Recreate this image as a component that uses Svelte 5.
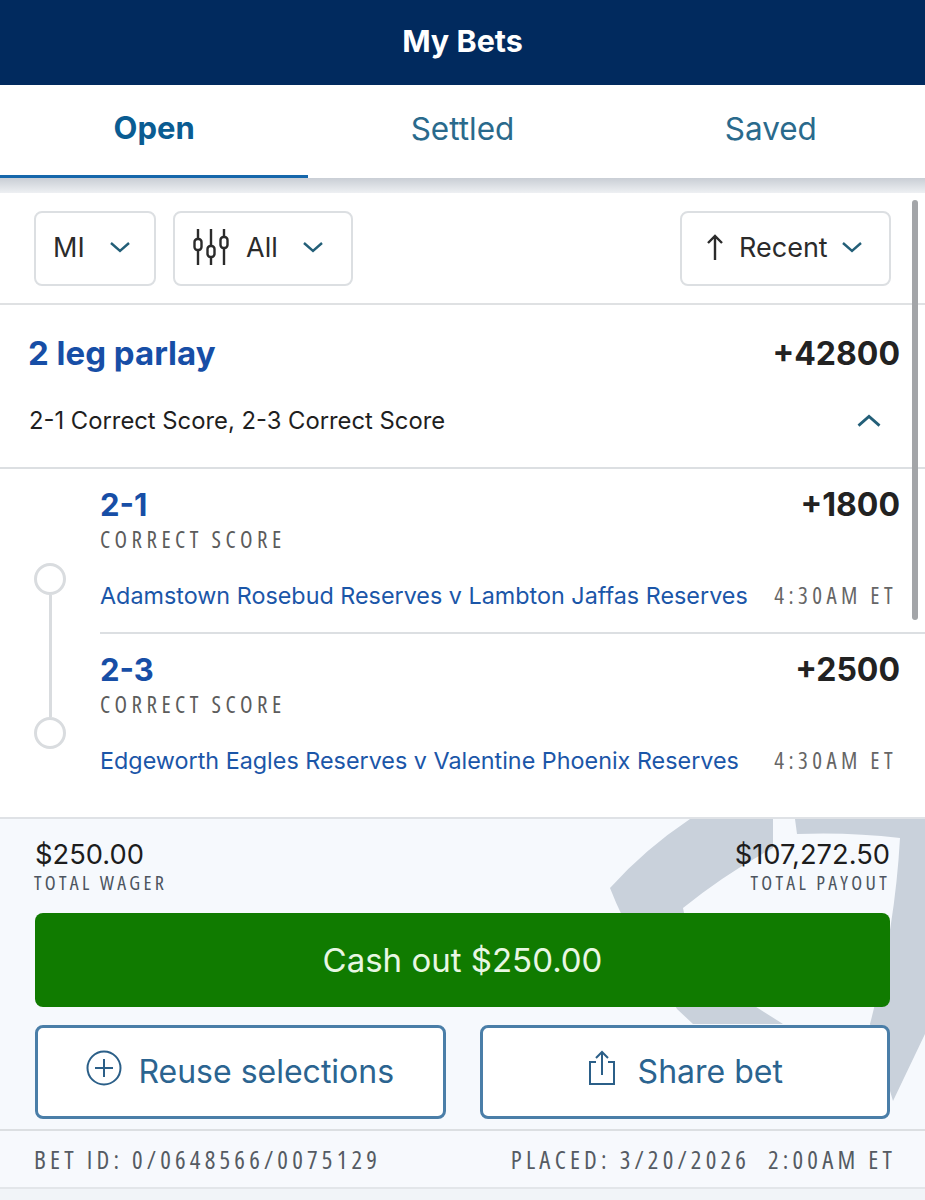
<script lang="ts">
	const tabs = ['Open', 'Settled', 'Saved'];
	const legs = [
		{ score: '2-1', odds: '+1800', game: 'Adamstown Rosebud Reserves v Lambton Jaffas Reserves' },
		{ score: '2-3', odds: '+2500', game: 'Edgeworth Eagles Reserves v Valentine Phoenix Reserves' }
	];
</script>

<style>
	:global(body) {
		margin: 0;
		background: #f1f4f8;
	}

	.page {
		position: relative;
		width: 925px;
		height: 1200px;
		overflow: hidden;
		font-family: Inter, 'Open Sans', sans-serif;
		color: #1f1f1f;
		background: #f1f4f8;
	}

	.topbar {
		height: 85px;
		background: #012a5e;
		color: #fff;
		font-size: 30.5px;
		font-weight: 700;
		display: flex;
		align-items: center;
		justify-content: center;
		padding-bottom: 5px;
		box-sizing: border-box;
	}

	.tabs {
		display: flex;
		height: 93px;
		background: #fff;
	}

	.tab {
		width: 308.5px;
		height: 93px;
		box-sizing: border-box;
		display: flex;
		align-items: center;
		justify-content: center;
		font-size: 31.5px;
		color: #2a6a8c;
		padding-bottom: 6px;
	}

	.tab.active {
		color: #0a5c92;
		font-size: 31px;
		font-weight: 700;
		border-bottom: 3px solid #1667ab;
	}

	.shade {
		height: 15px;
		background: linear-gradient(#c9ced5, #eef0f3);
	}

	.filters {
		height: 112px;
		box-sizing: border-box;
		background: #fff;
		border-bottom: 2px solid #dfe1e3;
		padding: 18px 34px 0;
		display: flex;
		gap: 17px;
	}

	.select {
		height: 75px;
		box-sizing: border-box;
		border: 2px solid #dcdfe2;
		border-radius: 8px;
		display: flex;
		align-items: center;
		font-size: 27px;
		color: #2b2b2b;
		padding-bottom: 3px;
	}

	.state {
		width: 122px;
		padding-left: 17px;
		gap: 24px;
	}

	.type {
		width: 180px;
		padding-left: 17px;
		gap: 16px;
	}

	.type .chev {
		margin-left: 8px;
	}

	.sort {
		width: 211px;
		margin-left: auto;
		padding-left: 24px;
		gap: 15px;
	}

	.sort .chev {
		margin-left: -2px;
	}

	.chev {
		width: 22px;
		height: 12px;
		fill: none;
		stroke: #235f78;
		stroke-width: 2.4;
	}

	.parlay {
		height: 164px;
		box-sizing: border-box;
		background: #fff;
		border-bottom: 2px solid #dcdfe2;
		padding: 28px 25px 0 28px;
	}

	.row {
		display: flex;
		justify-content: space-between;
		align-items: baseline;
	}

	.parlay-title {
		font-size: 33px;
		font-weight: 700;
		color: #174ea6;
	}

	.odds {
		font-size: 32px;
		font-weight: 700;
		color: #222;
	}

	.parlay-sub {
		margin-top: 33px;
		padding: 0 18px 0 1px;
		font-size: 23.8px;
		display: flex;
		justify-content: space-between;
		align-items: center;
	}

	.parlay-sub .chev {
		width: 26px;
		height: 14px;
	}

	.legs {
		height: 350px;
		display: flex;
		box-sizing: border-box;
		background: #fff;
		border-bottom: 2px solid #dfe2e6;
	}

	.rail {
		width: 100px;
		flex: none;
		box-sizing: border-box;
		padding: 94px 0 68px 34px;
		display: flex;
		flex-direction: column;
	}

	.dot {
		width: 32px;
		height: 32px;
		box-sizing: border-box;
		border: 3px solid #d9dcdf;
		border-radius: 50%;
		flex: none;
	}

	.bar {
		width: 3px;
		flex: 1;
		margin-left: 14.5px;
		background: #d9dcdf;
	}

	.leg-list {
		flex: 1;
		min-width: 0;
	}

	.leg {
		height: 163px;
		box-sizing: border-box;
		padding: 16px 25px 0 0;
	}

	.leg + .leg {
		height: 185px;
		border-top: 2px solid #dcdfe2;
	}

	.score {
		font-size: 31px;
		font-weight: 700;
		color: #174ea6;
		line-height: 40px;
	}

	.market {
		font-family: 'Open Sans', sans-serif;
		font-stretch: 75%;
		font-size: 23px;
		letter-spacing: 4.45px;
		color: #5c5c5c;
		line-height: 28px;
		white-space: nowrap;
	}

	.game-row {
		margin-top: 26px;
		display: flex;
		justify-content: space-between;
		align-items: baseline;
		padding-right: 3px;
	}

	.game {
		font-size: 23.35px;
		color: #1b56a8;
		white-space: nowrap;
	}

	.time {
		font-family: 'Open Sans', sans-serif;
		font-stretch: 75%;
		font-size: 23px;
		letter-spacing: 4.4px;
		color: #666;
		white-space: nowrap;
	}

	.summary {
		position: relative;
		height: 312px;
		box-sizing: border-box;
		background: #f6f9fd;
		border-bottom: 2px solid #dcdfe2;
		padding: 20px 35px 0;
		overflow: hidden;
	}

	.watermark {
		position: absolute;
		left: 0;
		top: 0;
		width: 925px;
		height: 312px;
		fill: #c9d1db;
	}

	.totals {
		position: relative;
		display: flex;
		justify-content: space-between;
	}

	.amount {
		font-size: 27.3px;
		line-height: 32px;
		color: #1d1d1d;
	}

	.label {
		font-family: 'Open Sans', sans-serif;
		font-stretch: 75%;
		font-size: 20px;
		letter-spacing: 3.3px;
		line-height: 24px;
		color: #4d5560;
		margin-left: -1px;
	}

	.right {
		text-align: right;
	}

	.cash {
		position: relative;
		margin-top: 18px;
		height: 94px;
		box-sizing: border-box;
		border-radius: 8px;
		background: #107b00;
		color: #e8f7e3;
		font-size: 33px;
		display: flex;
		align-items: center;
		justify-content: center;
	}

	.actions {
		position: relative;
		margin-top: 18px;
		display: flex;
		gap: 34px;
	}

	.action {
		flex: 1;
		height: 94px;
		box-sizing: border-box;
		background: #fff;
		border: 3px solid #4a7ea8;
		border-radius: 8px;
		color: #2b6490;
		font-size: 32px;
		display: flex;
		align-items: center;
		justify-content: center;
		gap: 16px;
		padding-bottom: 2px;
	}

	.action.share {
		gap: 21px;
	}

	.action svg {
		fill: none;
		stroke: #2b5f88;
		stroke-width: 2;
		margin-top: -6px;
	}

	.foot {
		height: 58px;
		box-sizing: border-box;
		background: #f7f9fd;
		border-bottom: 2px solid #e3e6ea;
		padding: 0 29px 0 34px;
		display: flex;
		justify-content: space-between;
		align-items: center;
		font-family: 'Open Sans', sans-serif;
		font-stretch: 75%;
		font-size: 25px;
		letter-spacing: 4.2px;
		color: #555b63;
		white-space: pre;
	}

	.scrollbar {
		position: absolute;
		left: 912px;
		top: 200px;
		width: 6px;
		height: 420px;
		border-radius: 3px;
		background: #a3a5a8;
	}
</style>

<div class="page">
	<div class="topbar">My Bets</div>

	<div class="tabs">
		{#each tabs as t, i}
			<div class="tab" class:active={i === 0}>{t}</div>
		{/each}
	</div>
	<div class="shade"></div>

	<div class="filters">
		<div class="select state">
			MI
			<svg class="chev" viewBox="0 0 22 12"><path d="M2 2l9 8 9-8" /></svg>
		</div>
		<div class="select type">
			<svg width="38" height="38" viewBox="0 0 38 38" fill="none" stroke="#2b2b2b" stroke-width="2.4">
				<path d="M6 1v10M6 22v15M19 1v17M19 29v8M32 1v8M32 20v17" />
				<rect x="2.5" y="11" width="7" height="11" rx="3" />
				<rect x="15.5" y="18" width="7" height="11" rx="3" />
				<rect x="28.5" y="9" width="7" height="11" rx="3" />
			</svg>
			All
			<svg class="chev" viewBox="0 0 22 12"><path d="M2 2l9 8 9-8" /></svg>
		</div>
		<div class="select sort">
			<svg width="18" height="26" viewBox="0 0 18 26" fill="none" stroke="#2b2b2b" stroke-width="2.4">
				<path d="M9 2v24M2 9l7-7 7 7" />
			</svg>
			Recent
			<svg class="chev" viewBox="0 0 22 12"><path d="M2 2l9 8 9-8" /></svg>
		</div>
	</div>

	<div class="parlay">
		<div class="row">
			<div class="parlay-title">2 leg parlay</div>
			<div class="odds">+42800</div>
		</div>
		<div class="parlay-sub">
			2-1 Correct Score, 2-3 Correct Score
			<svg class="chev" viewBox="0 0 22 12"><path d="M2 10l9-8 9 8" /></svg>
		</div>
	</div>

	<div class="legs">
		<div class="rail">
			<div class="dot"></div>
			<div class="bar"></div>
			<div class="dot"></div>
		</div>
		<div class="leg-list">
			{#each legs as leg}
				<div class="leg">
					<div class="row">
						<div class="score">{leg.score}</div>
						<div class="odds">{leg.odds}</div>
					</div>
					<div class="market">CORRECT SCORE</div>
					<div class="game-row">
						<div class="game">{leg.game}</div>
						<div class="time">4:30AM ET</div>
					</div>
				</div>
			{/each}
		</div>
	</div>

	<div class="summary">
		<svg class="watermark" viewBox="0 0 925 312">
			<path d="M690 0H773V29Q725 55 683 89Q690 130 720 165L783 205H693L677 190L640 130Q622 100 610 69Q645 30 690 0Z" />
			<path d="M795 0H925V215L893 282L870 205Q895 110 900 19Q850 13 797 15Z" />
		</svg>
		<div class="totals">
			<div>
				<div class="amount">$250.00</div>
				<div class="label">TOTAL WAGER</div>
			</div>
			<div class="right">
				<div class="amount">$107,272.50</div>
				<div class="label">TOTAL PAYOUT</div>
			</div>
		</div>
		<div class="cash">Cash out $250.00</div>
		<div class="actions">
			<div class="action">
				<svg width="36" height="36" viewBox="0 0 36 36">
					<circle cx="18" cy="18" r="16.5" />
					<path d="M18 9v18M9 18h18" />
				</svg>
				Reuse selections
			</div>
			<div class="action share">
				<svg width="30" height="36" viewBox="0 0 30 36">
					<path d="M9 12H3v22h24V12h-6M15 25V2M9 8l6-6 6 6" />
				</svg>
				Share bet
			</div>
		</div>
	</div>

	<div class="foot">
		<div>BET ID: 0/0648566/0075129</div>
		<div>PLACED: 3/20/2026  2:00AM ET</div>
	</div>

	<div class="scrollbar"></div>
</div>
